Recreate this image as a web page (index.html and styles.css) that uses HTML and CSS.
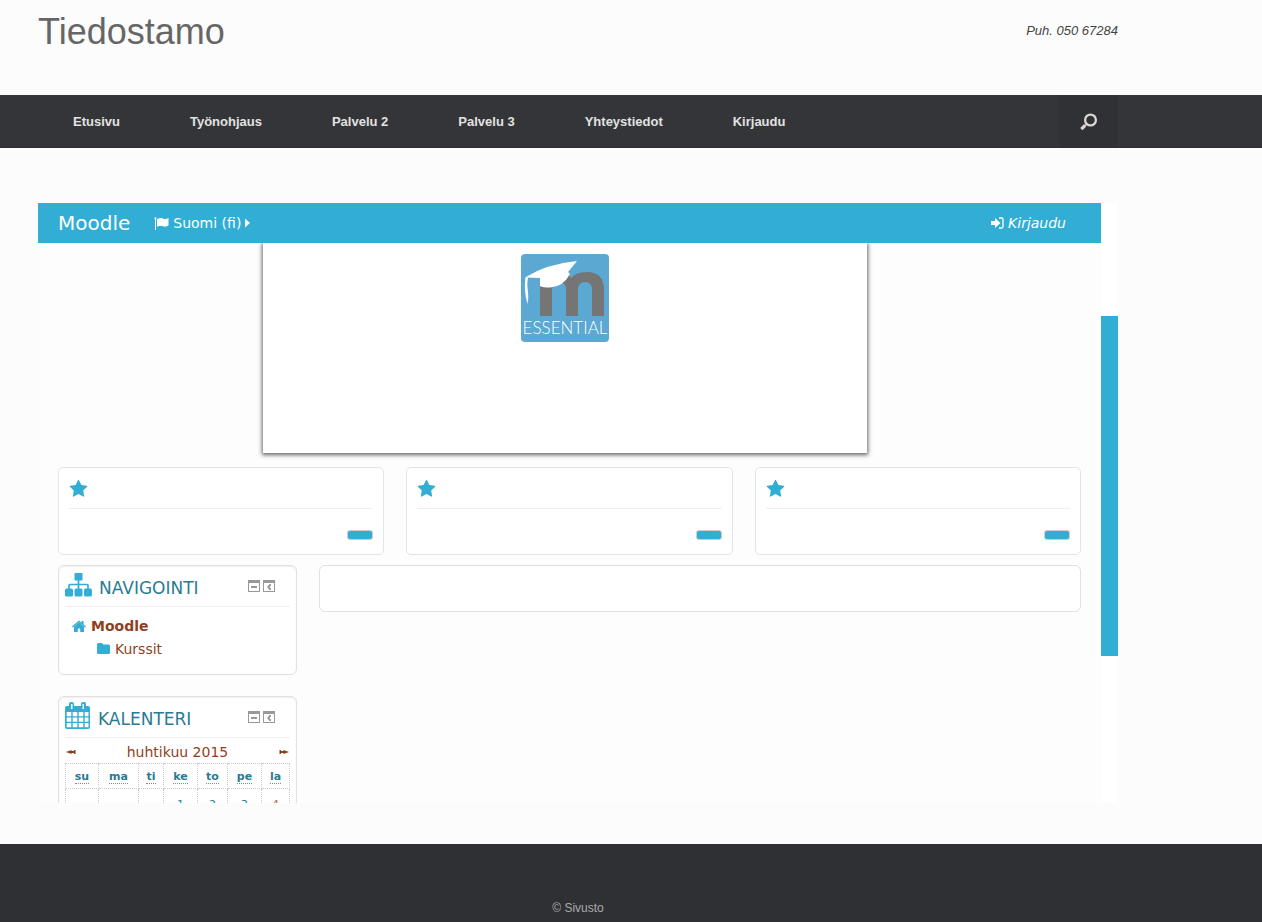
FILE: index.html
```html
<!DOCTYPE html>
<html lang="fi">
<head>
<meta charset="utf-8">
<meta name="viewport" content="width=device-width, initial-scale=1">
<title>Tiedostamo</title>
<link rel="stylesheet" href="styles.css">
</head>
<body>
<svg class="defs" aria-hidden="true">
  <symbol id="star" viewBox="0 0 1792 1792"><path d="M1728 647q0 22-26 48l-363 354 86 500q1 7 1 20 0 21-10.500 35.500t-30.500 14.500q-19 0-40-12l-449-236-449 236q-22 12-40 12-21 0-31.500-14.500t-10.500-35.500q0-6 2-20l86-500-364-354q-25-27-25-48 0-37 56-46l502-73 225-455q19-41 49-41t49 41l225 455 502 73q56 9 56 46z"/></symbol>
  <symbol id="minimise" viewBox="0 0 12 12"><path fill-rule="evenodd" d="M0 0h12v12H0zM1 3v8h10V3zM3 6h6v2H3z"/></symbol>
  <symbol id="dock" viewBox="0 0 12 12"><path fill-rule="evenodd" d="M0 0h12v12H0zM1 3v8h10V3zM6.500 4H8v1.500L6.500 7 8 8.500V10H6.500L4 7z"/></symbol>
</svg>

<header class="site-header">
  <div class="wrap header-row">
    <h1 class="site-title">Tiedostamo</h1>
    <p class="phone">Puh. 050 67284</p>
  </div>
</header>

<nav class="site-nav">
  <div class="wrap nav-row">
    <a href="#">Etusivu</a>
    <a href="#">Työnohjaus</a>
    <a href="#">Palvelu 2</a>
    <a href="#">Palvelu 3</a>
    <a href="#">Yhteystiedot</a>
    <a href="#">Kirjaudu</a>
    <button class="search" type="button" aria-label="Haku">
      <svg width="18" height="18" viewBox="0 0 18 18" fill="none" stroke="#d9d6d2"><circle cx="10.500" cy="7" r="5.400" stroke-width="2.300"/><path d="M6 11.500l-1 1" stroke-width="2"/><path d="M5 12.500L1.300 16.200" stroke-width="3.200"/></svg>
    </button>
  </div>
</nav>

<main class="wrap">
  <div class="moodle">
    <div class="view">
      <div class="bar">
        <a class="brand" href="#">Moodle</a>
        <a class="lang" href="#">
          <svg width="15" height="13" viewBox="0 0 15 13" fill="#fff"><path d="M1.500.2a1.200 1.200 0 0 1 .5 2.200V13H1V2.400A1.200 1.200 0 0 1 1.500.2zM3 2.200C6.500.2 8 1 10 2c1.500.5 3-.3 4.500-1v7.500C11.500 10 10.500 9.800 9 9.200 7 8.200 5 8.700 3 9.800z"/></svg>
          <span>Suomi (fi)</span>
          <svg width="5" height="10" viewBox="0 0 5 10" fill="#fff"><path d="M0 .5v9L5 5z"/></svg>
        </a>
        <a class="login" href="#">
          <svg width="13" height="12" viewBox="0 0 13 12"><path d="M0 3.900h4V1l5.400 5L4 11V8.100H0z" fill="#fff"/><path d="M8 1h2.500q1.500 0 1.500 1.500v7q0 1.500-1.500 1.500H8" fill="none" stroke="#fff" stroke-width="1.300"/></svg>
          <span>Kirjaudu</span>
        </a>
      </div>

      <div class="page">
        <section class="slide">
          <svg width="88" height="88" viewBox="0 0 88 88" role="img" aria-label="Essential">
            <rect width="88" height="88" rx="4" fill="#5ba9d2"/>
            <path d="M19 62V31Q19 18 35 18q12 0 15 6 5-6 16-6 17 0 17 18v26H71V36q0-8-7-8t-7 8v26H45V36q0-8-7-8t-7 8v26z" fill="#757575"/>
            <path d="M4 23.500Q25 10 56 7L47 18l2 2Q42 33 29 33.500q-7 0-10-1.500V24z" fill="#fff"/>
            <path d="M4.500 23q-2 14 2 27Q8 43 6.500 34q-.5-6 .5-10z" fill="#fff"/>
            <text class="logo-text" x="44" y="80" text-anchor="middle">ESSENTIAL</text>
          </svg>
        </section>

        <section class="spots">
          <article class="spot"><div class="spot-head"><svg class="star"><use href="#star"/></svg></div><button type="button" aria-label="Lue lisää"></button></article>
          <article class="spot"><div class="spot-head"><svg class="star"><use href="#star"/></svg></div><button type="button" aria-label="Lue lisää"></button></article>
          <article class="spot"><div class="spot-head"><svg class="star"><use href="#star"/></svg></div><button type="button" aria-label="Lue lisää"></button></article>
        </section>

        <div class="columns">
          <aside class="side">
            <section class="block nav-block">
              <header class="block-head">
                <svg width="27" height="26" viewBox="0 0 27 26" fill="#32add3"><rect x="9.500" width="8" height="7.500" rx="1"/><rect y="15.500" width="8" height="8" rx="1.500"/><rect x="9.500" y="15.500" width="8" height="8" rx="1.500"/><rect x="19" y="15.500" width="8" height="8" rx="1.500"/><path d="M4 16v-3.500q0-1 1-1h17q1 0 1 1V16M13.500 7v9" fill="none" stroke="#32add3" stroke-width="1.700"/></svg>
                <h2>NAVIGOINTI</h2>
                <button type="button" aria-label="Pienennä"><svg><use href="#minimise"/></svg></button>
                <button type="button" aria-label="Telakoi"><svg><use href="#dock"/></svg></button>
              </header>
              <ul class="tree">
                <li><a href="#"><svg width="14" height="14" viewBox="0 0 14 14" fill="#32add3"><path d="M7 .5L9.500 2.700V1h2v3.400L14 6.600l-1 1L7 2.300 1 7.600l-1-1z"/><path d="M2 6.800l5-4.500 5 4.500V12H8.200V8.500H5.800V12H2z"/></svg><b>Moodle</b></a>
                  <ul>
                    <li><a href="#"><svg width="13" height="13" viewBox="0 0 13 13" fill="#32add3"><path d="M0 1.500Q0 0 1.500 0h3Q6 0 6 1.500h5.500Q13 1.500 13 3v6.500q0 1.500-1.500 1.500h-10Q0 11 0 9.500z"/></svg><span>Kurssit</span></a></li>
                  </ul>
                </li>
              </ul>
            </section>

            <section class="block">
              <header class="block-head">
                <svg width="26" height="30" viewBox="0 0 26 30"><path fill="#32add3" fill-rule="evenodd" d="M2 4h2V2q0-2 2-2h1q2 0 2 2v2h7V2q0-2 2-2h1q2 0 2 2v2h2q2 0 2 2v19q0 2-2 2H2q-2 0-2-2V6q0-2 2-2zM6 2v5h1.500V2zM17.500 2v5H19V2zM1.700 10v4.300h4.600V10zm6 0v4.300h4.600V10zm6 0v4.300h4.600V10zm6 0v4.300h3.800V10zM1.700 15.500v4.300h4.600v-4.300zm6 0v4.300h4.600v-4.300zm6 0v4.300h4.600v-4.300zm6 0v4.300h3.800v-4.300zM1.700 21v4.300h4.600V21zm6 0v4.300h4.600V21zm6 0v4.300h4.600V21zm6 0v4.300h3.800V21z"/></svg>
                <h2>KALENTERI</h2>
                <button type="button" aria-label="Pienennä"><svg><use href="#minimise"/></svg></button>
                <button type="button" aria-label="Telakoi"><svg><use href="#dock"/></svg></button>
              </header>
              <div class="month">
                <a href="#" aria-label="Edellinen kuukausi"><svg width="10" height="6" viewBox="0 0 10 6"><path d="M0 3l5.500-2v1H8V1h1.500v4H8V4H5.500v1z"/></svg></a>
                <a href="#">huhtikuu 2015</a>
                <a href="#" aria-label="Seuraava kuukausi"><svg width="10" height="6" viewBox="0 0 10 6"><path d="M10 3L4.500 1v1H2V1H.5v4H2V4h2.500v1z"/></svg></a>
              </div>
              <table class="calendar">
                <colgroup><col class="c33"><col class="c40"><col class="c25"><col class="c34"><col class="c30"><col class="c34"><col></colgroup>
                <thead><tr><th><abbr>su</abbr></th><th><abbr>ma</abbr></th><th><abbr>ti</abbr></th><th><abbr>ke</abbr></th><th><abbr>to</abbr></th><th><abbr>pe</abbr></th><th><abbr>la</abbr></th></tr></thead>
                <tbody><tr><td></td><td></td><td></td><td>1</td><td>2</td><td>3</td><td class="weekend">4</td></tr></tbody>
              </table>
            </section>
          </aside>
          <section class="content"></section>
        </div>
      </div>
    </div>
    <div class="track"><div class="thumb"></div></div>
  </div>
</main>

<footer class="site-footer"><div class="wrap">© Sivusto</div></footer>
</body>
</html>
```
FILE: styles.css
```css
* { box-sizing: border-box; }
html { background: #2f3033; }
body {
  margin: 0;
  min-height: 100vh;
  display: flex;
  flex-direction: column;
  background: #fcfcfc;
  font-family: "Liberation Sans", Arial, sans-serif;
  font-size: 13px;
  color: #444;
}
a { color: inherit; text-decoration: none; }
button { border: 0; padding: 0; background: none; cursor: pointer; }
svg { display: block; flex: none; }
.defs { position: absolute; width: 0; height: 0; }
.wrap { max-width: 1118px; padding-left: 38px; }

.header-row { display: flex; justify-content: space-between; height: 95px; padding-top: 10px; }
.site-title { margin: 0; font-size: 36px; line-height: 44px; font-weight: 400; color: #666; }
.phone { margin: 0; font-size: 13px; line-height: 42px; font-style: italic; }

.site-nav { background: #343538; border-bottom: 1px solid #2e2f32; }
.nav-row { display: flex; height: 52px; }
.nav-row a { padding: 0 35px; line-height: 54px; font-weight: 700; color: #e2e2e2; }
.search { display: grid; place-items: center; width: 59px; padding-top: 2px; margin-left: auto; background: #303134; }

.moodle {
  display: flex;
  height: 600px;
  margin: 55px 0 41px;
  overflow: hidden;
  font-family: Verdana, "DejaVu Sans", sans-serif;
  font-size: 14px;
}
.view { flex: 1; background: #fdfdfd; }
.track { width: 17px; padding-top: 113px; background: #fff; }
.thumb { height: 340px; background: #32add3; }

.bar { position: relative; display: flex; align-items: center; height: 40px; padding: 0 35px 0 20px; background: #32add3; color: #fff; }
.brand { font-size: 20px; }
.lang, .login { display: flex; align-items: center; gap: 4px; }
.lang { margin-left: 24px; }
.login { margin-left: auto; font-style: italic; }

.page { padding: 0 20px; }
.slide {
  display: flex;
  justify-content: center;
  width: 59%;
  height: 210px;
  margin-left: 205px;
  padding-top: 11px;
  background: #fff;
  box-shadow: 0 1px 4px 1px #666;
}
.logo-text { font: 300 17px Lato, sans-serif; fill: #fff; }

.spots { display: grid; grid-template-columns: repeat(3, 1fr); gap: 22px; margin-top: 14px; }
.spot { height: 88px; padding: 10px; border: 1px solid #e4e4e4; border-radius: 5px; background: #fff; }
.spot-head { height: 31px; padding-top: 1px; border-bottom: 1px solid #eee; }
.star { width: 19px; height: 20px; fill: #32add3; }
.spot button { display: block; width: 26px; height: 10px; margin: 21px 0 0 auto; border: 1px solid #ccc; border-radius: 3px; background: #32add3; }

.columns { display: grid; grid-template-columns: 239px 1fr; gap: 22px; align-items: start; margin-top: 10px; }
.side { display: grid; grid-template-columns: minmax(0, 1fr); gap: 21px; }
.content, .block { border: 1px solid #e1e1e1; border-radius: 6px; background: #fff; }
.content { height: 47px; }
.block { padding: 0 6px; box-shadow: inset 0 1px 2px #eee; }
.nav-block { height: 110px; }
.block-head { display: flex; align-items: center; height: 41px; padding-right: 15px; border-bottom: 1px solid #eee; }
.block-head h2 { flex: 1; margin: 4px 0 0 7px; font-size: 17px; font-weight: 400; color: #2a7b93; }
.block-head button { margin-left: 3px; }
.block-head button svg { width: 12px; height: 12px; fill: #999; }

.tree, .tree ul { margin: 0; padding: 0; list-style: none; }
.tree { padding: 8px 0 0 7px; color: #8f3f1d; }
.tree ul { padding-left: 25px; }
.tree a { display: flex; align-items: center; gap: 5px; line-height: 23px; }

.month { display: flex; align-items: center; justify-content: space-between; height: 25px; padding: 3px 1px 0; color: #8f3f1d; }
.month svg { fill: #8f3f1d; }
.calendar { width: 100%; table-layout: fixed; border-collapse: collapse; font-size: 11px; color: #2a7b93; }
.calendar th, .calendar td { height: 25px; padding: 0; border: 1px dotted #ccc; text-align: center; }
.calendar td { height: 32px; }
.calendar abbr { border-bottom: 1px dotted #888; }
.calendar .weekend { color: #b8684c; }
.c33 { width: 33px; }
.c40 { width: 40px; }
.c25 { width: 25px; }
.c34 { width: 34px; }
.c30 { width: 30px; }

.site-footer { flex: 1; padding-top: 57px; background: #2f3033; color: #aaa; font-size: 12px; line-height: 14px; text-align: center; }
```
